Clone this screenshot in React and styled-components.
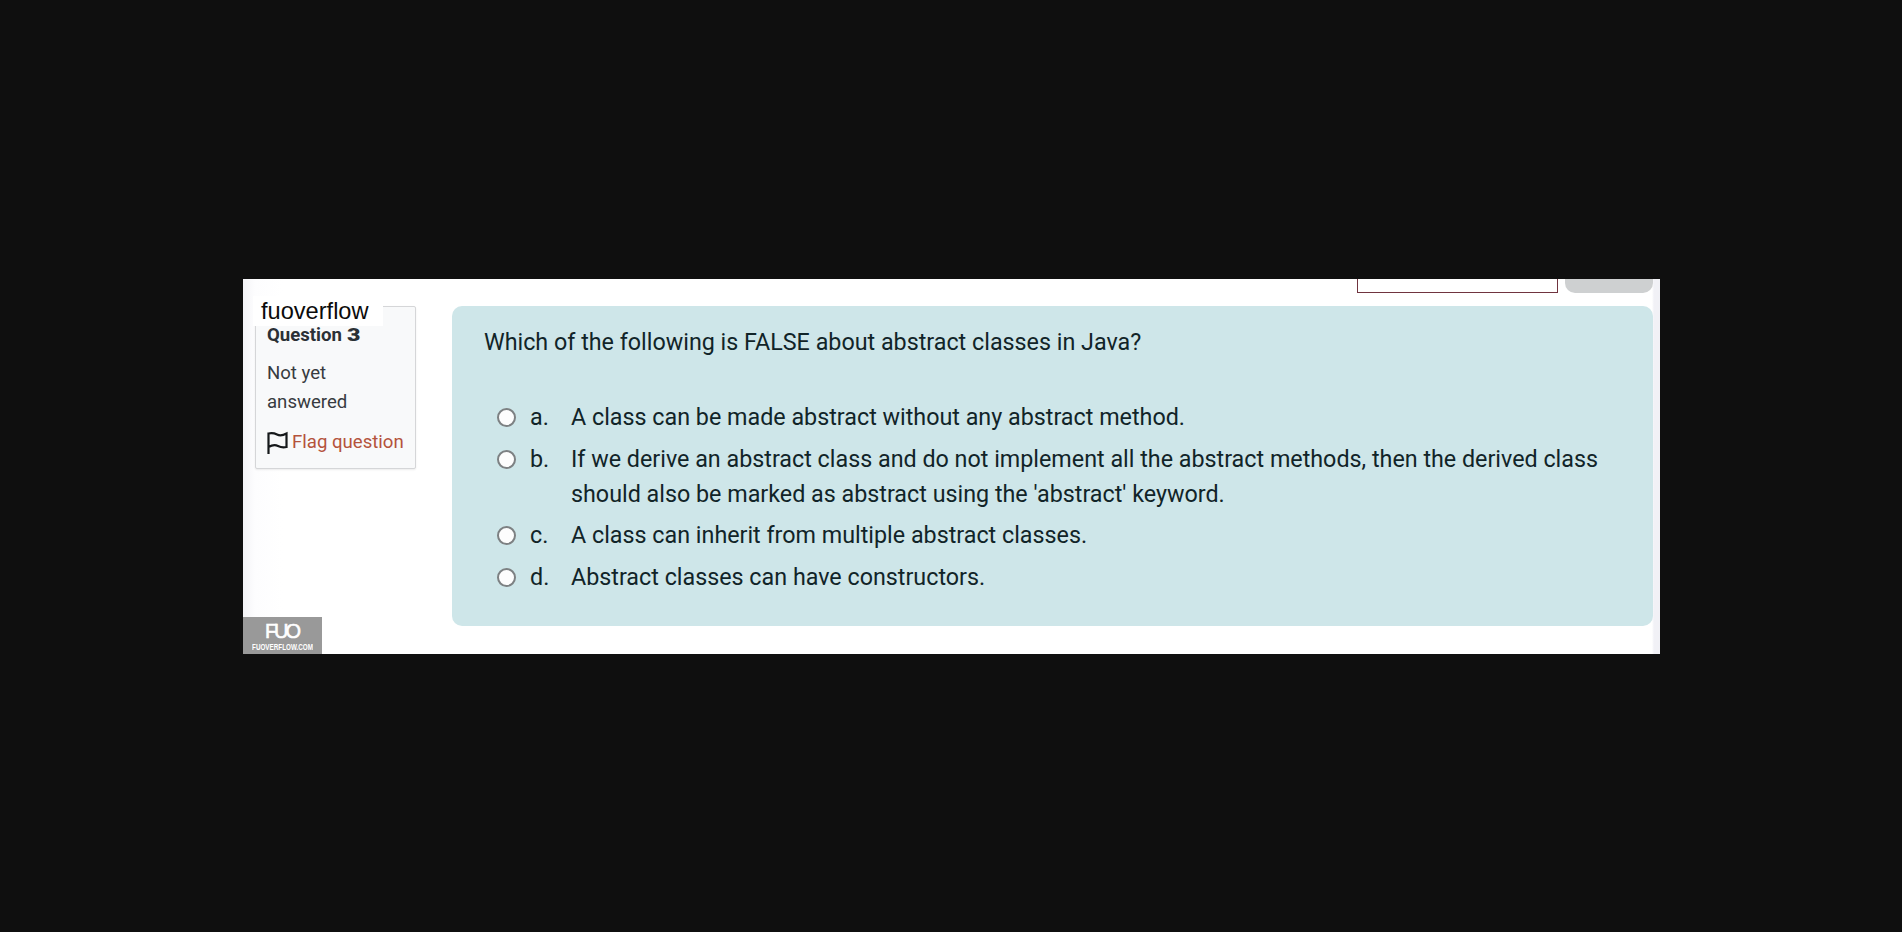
import React from "react"
import styled, { createGlobalStyle } from "styled-components"

const GlobalStyle = createGlobalStyle`
    html, body {
        margin: 0;
        height: 100%;
        background: #0f0f0f;
        font-family: Roboto, "Liberation Sans", sans-serif;
    }
`

const Screen = styled.div`
    height: 932px;
    padding: 279px 0 0 243px;
    box-sizing: border-box;
    overflow: hidden;
`

const Page = styled.div`
    position: relative;
    width: 1417px;
    height: 375px;
    background: linear-gradient(to right, #f4f4f7 0, #fdfdfe 12px, #ffffff 40px, #ffffff 1409px, #f1f1f6 1411px);
    overflow: hidden;
`

const TopBar = styled.div`
    display: flex;
    justify-content: flex-end;
    gap: 7px;
    height: 14px;
    padding-right: 7px;
`

const OutlineBox = styled.div`
    width: 201px;
    box-sizing: border-box;
    background: #fff;
    border: 1px solid #70343f;
    border-top: 0;
`

const GreyButton = styled.div`
    width: 88px;
    background: #ced0d1;
    border-radius: 0 0 10px 10px;
`

const Content = styled.div`
    display: flex;
    align-items: flex-start;
    gap: 36px;
    margin-top: 13px;
    padding: 0 7px 0 12px;
`

const InfoCard = styled.aside`
    width: 161px;
    height: 163px;
    box-sizing: border-box;
    flex: none;
    padding: 17px 0 0 11px;
    background: #f8f9fa;
    border: 1px solid #d5d6d8;
    border-radius: 2px;
    box-shadow: 0 1px 2px rgba(0, 0, 0, 0.08);
    color: #343a40;
`

const QuestionNo = styled.div`
    font-size: 18.6px;
    font-weight: 700;
    line-height: 22px;
    color: #2b3036;
`

const QuestionDigit = styled.span`
    display: inline-block;
    font-weight: 900;
    transform: scaleX(1.25);
    transform-origin: left center;
`

const StateText = styled.div`
    margin-top: 13px;
    font-size: 18.6px;
    line-height: 29px;
    color: #373b40;
`

const FlagRow = styled.div`
    display: flex;
    align-items: center;
    gap: 4px;
    margin-top: 13px;
    font-size: 18.6px;
    line-height: 24px;
    color: #b4533c;
`

const QuestionPanel = styled.section`
    flex: 1;
    height: 320px;
    box-sizing: border-box;
    padding: 21px 30px 0 32px;
    background: #cee6e9;
    border-radius: 10px;
    color: #112428;
    font-size: 23.3px;
`

const Prompt = styled.div`
    line-height: 30px;
    margin-bottom: 43px;
`

const Answers = styled.div`
    display: flex;
    flex-direction: column;
    gap: 6.5px;
    padding-left: 13px;
`

const Answer = styled.div`
    display: flex;
    align-items: flex-start;
    line-height: 35px;
`

const Radio = styled.span`
    flex: none;
    width: 19px;
    height: 19px;
    box-sizing: border-box;
    margin: 8px 14px 0 0;
    background: #fdfdfd;
    border: 2px solid #7d8183;
    border-radius: 50%;
`

const Letter = styled.span`
    flex: none;
    width: 41px;
`

const Label = styled.div`
    flex: 1;
`

const SiteName = styled.div`
    position: absolute;
    left: 10px;
    top: 17px;
    width: 130px;
    height: 30px;
    padding-left: 8px;
    box-sizing: border-box;
    background: #fff;
    font-family: "Liberation Sans", Arial, sans-serif;
    font-size: 23.6px;
    line-height: 30px;
    color: #0b0b0b;
`

const Watermark = styled.div`
    position: absolute;
    left: 0;
    bottom: 0;
    width: 79px;
    height: 37px;
    display: flex;
    flex-direction: column;
    align-items: center;
    background: #999999;
    color: #fff;
`

const MarkLogo = styled.div`
    margin-top: 3px;
    padding-right: 2px;
    font-family: "Liberation Sans", Arial, sans-serif;
    font-size: 20px;
    line-height: 22px;
    letter-spacing: -3px;
    -webkit-text-stroke: 0.6px #fff;
`

const MarkUrl = styled.div`
    font-family: "Liberation Sans", Arial, sans-serif;
    font-size: 9px;
    font-weight: 700;
    line-height: 10px;
    transform: scaleX(0.7);
    white-space: nowrap;
`

const FlagIcon = () => (
    <svg width="21" height="23" viewBox="0 0 21 23" fill="none" stroke="#15181a" strokeWidth="2.2">
        <path d="M1.5 23V2.5Q6 1.5 10 3.5T19.5 2.5V16Q15 17 11 15T1.5 16" />
    </svg>
)

const answers = [
    { letter: "a.", text: "A class can be made abstract without any abstract method." },
    {
        letter: "b.",
        text: "If we derive an abstract class and do not implement all the abstract methods, then the derived class should also be marked as abstract using the 'abstract' keyword.",
    },
    { letter: "c.", text: "A class can inherit from multiple abstract classes." },
    { letter: "d.", text: "Abstract classes can have constructors." },
]

const App = () => (
    <>
        <GlobalStyle />
        <Screen>
            <Page>
                <TopBar>
                    <OutlineBox />
                    <GreyButton />
                </TopBar>
                <Content>
                    <InfoCard>
                        <QuestionNo>
                            Question <QuestionDigit>3</QuestionDigit>
                        </QuestionNo>
                        <StateText>
                            Not yet
                            <br />
                            answered
                        </StateText>
                        <FlagRow>
                            <FlagIcon />
                            Flag question
                        </FlagRow>
                    </InfoCard>
                    <QuestionPanel>
                        <Prompt>Which of the following is FALSE about abstract classes in Java?</Prompt>
                        <Answers>
                            {answers.map((a) => (
                                <Answer key={a.letter}>
                                    <Radio />
                                    <Letter>{a.letter}</Letter>
                                    <Label>{a.text}</Label>
                                </Answer>
                            ))}
                        </Answers>
                    </QuestionPanel>
                </Content>
                <SiteName>fuoverflow</SiteName>
                <Watermark>
                    <MarkLogo>FUO</MarkLogo>
                    <MarkUrl>FUOVERFLOW.COM</MarkUrl>
                </Watermark>
            </Page>
        </Screen>
    </>
)

export default App
